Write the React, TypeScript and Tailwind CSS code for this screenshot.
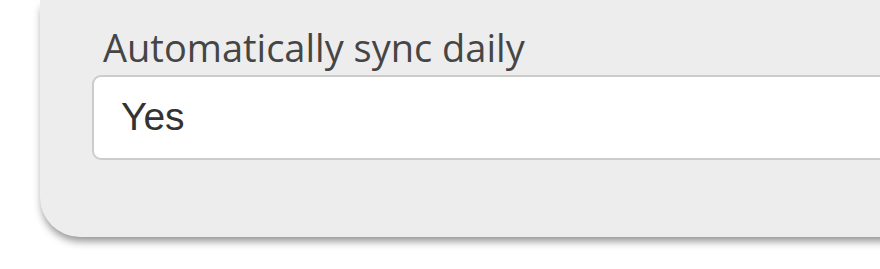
import React from "react";

export default function App() {
  return (
    <div className="w-[880px] h-[269px] overflow-hidden bg-white">
      <div className="ml-[40px] w-[900px] bg-[#ededed] rounded-bl-[40px] pt-[27px] pb-[77px] pl-[52px] shadow-[0_6px_8px_-2px_rgba(0,0,0,0.45)]">
        <label
          className="block pl-[11px] text-[38px] leading-[40px] text-[#454545]"
          style={{ fontFamily: '"Open Sans", sans-serif' }}
        >
          Automatically sync daily
        </label>
        <div className="mt-[8px] h-[85px] w-[900px] flex items-center bg-white border-2 border-[#cccccc] rounded-[9px] pl-[27px]">
          <span
            className="text-[39px] text-[#333333]"
            style={{ fontFamily: '"Liberation Sans", Arial, sans-serif' }}
          >
            Yes
          </span>
        </div>
      </div>
    </div>
  );
}
